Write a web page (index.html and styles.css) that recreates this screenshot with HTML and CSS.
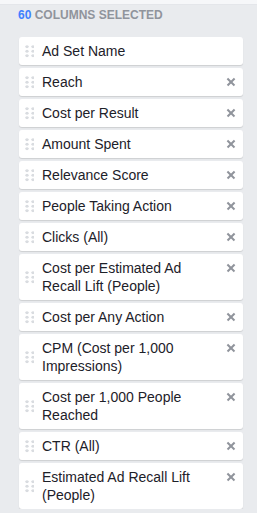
FILE: index.html
```html
<!DOCTYPE html>
<html>
<head>
<meta charset="utf-8">
<link rel="stylesheet" href="styles.css">
</head>
<body>
<div class="topbar"></div>
<div class="panel">
  <div class="header"><span class="count">60</span> COLUMNS SELECTED</div>
  <ul class="list">
    <li class="item"><span class="handle"></span><span class="label">Ad Set Name</span></li>
    <li class="item"><span class="handle"></span><span class="label">Reach</span><span class="remove"></span></li>
    <li class="item"><span class="handle"></span><span class="label">Cost per Result</span><span class="remove"></span></li>
    <li class="item"><span class="handle"></span><span class="label">Amount Spent</span><span class="remove"></span></li>
    <li class="item"><span class="handle"></span><span class="label">Relevance Score</span><span class="remove"></span></li>
    <li class="item"><span class="handle"></span><span class="label">People Taking Action</span><span class="remove"></span></li>
    <li class="item"><span class="handle"></span><span class="label">Clicks (All)</span><span class="remove"></span></li>
    <li class="item"><span class="handle"></span><span class="label">Cost per Estimated Ad Recall Lift (People)</span><span class="remove"></span></li>
    <li class="item"><span class="handle"></span><span class="label">Cost per Any Action</span><span class="remove"></span></li>
    <li class="item"><span class="handle"></span><span class="label">CPM (Cost per 1,000 Impressions)</span><span class="remove"></span></li>
    <li class="item"><span class="handle"></span><span class="label">Cost per 1,000 People Reached</span><span class="remove"></span></li>
    <li class="item"><span class="handle"></span><span class="label">CTR (All)</span><span class="remove"></span></li>
    <li class="item"><span class="handle"></span><span class="label">Estimated Ad Recall Lift (People)</span><span class="remove"></span></li>
  </ul>
</div>
</body>
</html>
```

FILE: styles.css
```css
html, body {
  margin: 0;
  padding: 0;
  background: #e9ebee;
  font-family: "Liberation Sans", Arial, sans-serif;
  overflow: hidden;
}
.topbar {
  height: 4px;
  background: #f6f7f9;
  border-bottom: 1px solid #e4e6ea;
}
.panel {
  padding: 0 14px 0 19px;
}
.header {
  font-size: 12px;
  font-weight: bold;
  color: #90949c;
  line-height: 14px;
  margin-left: -1px;
  height: 27px;
  box-sizing: border-box;
  padding-top: 3px;
  margin-bottom: 5px;
}
.count {
  color: #4080ff;
}
.list {
  list-style: none;
  margin: 0;
  padding: 0;
  display: flex;
  flex-direction: column;
  gap: 3px;
}
.item {
  display: flex;
  align-items: flex-start;
  background: #fff;
  border-radius: 3px;
  box-shadow: 0 1px 1px rgba(0, 0, 0, 0.12);
  padding: 5px 8px 5px 6px;
  min-height: 18px;
}
.handle {
  flex: none;
  align-self: center;
  width: 9px;
  height: 13px;
  margin-right: 8px;
  background-image: radial-gradient(circle, #d9dce0 1.5px, transparent 1.8px);
  background-size: 6px 4.5px;
  background-position: -1px -0.5px;
}
.label {
  flex: 1;
  font-size: 14px;
  line-height: 18px;
  color: #1d2129;
}
.remove {
  flex: none;
  position: relative;
  width: 8px;
  height: 8px;
  margin-top: 5px;
  margin-left: 6px;
}
.remove::before,
.remove::after {
  content: "";
  position: absolute;
  left: -1px;
  top: 3px;
  width: 10px;
  height: 1.8px;
  background: #90949c;
  transform: rotate(45deg);
}
.remove::after {
  transform: rotate(-45deg);
}
```
